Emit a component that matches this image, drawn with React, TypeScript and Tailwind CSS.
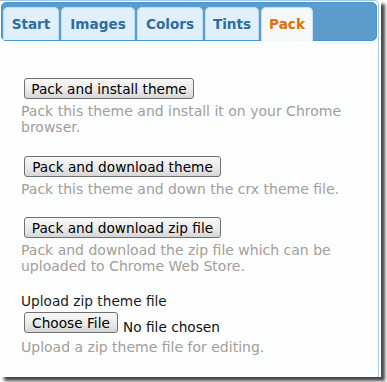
import React from "react";

const tabs = [
  { label: "Start", w: "w-[56px]" },
  { label: "Images", w: "w-[74px]" },
  { label: "Colors", w: "w-[66px]" },
  { label: "Tints", w: "w-[54px]" },
  { label: "Pack", w: "w-[52px]", active: true },
];

function Btn({ children, w }: { children: React.ReactNode; w: string }) {
  return (
    <button
      className={`${w} h-[21px] ml-[3px] flex items-center justify-center border border-[#707070] rounded-[3px] bg-linear-to-b from-[#f7f7f7] via-[#ececec] to-[#d6d6d6] text-[13.7px] leading-[16px] text-black whitespace-nowrap`}
    >
      {children}
    </button>
  );
}

function Desc({ children }: { children: React.ReactNode }) {
  return <p className="mt-[4px] text-[14px] leading-[16px] text-[#a39e98]">{children}</p>;
}

export default function App() {
  return (
    <div className="w-[387px] h-[382px] bg-white overflow-hidden font-['DejaVu_Sans',Verdana,sans-serif]">
      <div className="w-[381px] h-[377px] bg-white shadow-[4px_4px_3px_rgba(40,40,40,0.85)]">
        <div className="w-[379px] h-[377px] bg-[#fcfdfd] border-t border-r border-[#a6c9e2] rounded-tr-[5px] pt-[1px] flex flex-col">
          <div className="ml-[1px] w-[376px] h-[39px] bg-[#5c9ccc] border border-[#4297d7] rounded-[5px] pt-[4px] pl-[1px] flex items-start gap-[2px]">
            {tabs.map((t) =>
              t.active ? (
                <div
                  key={t.label}
                  className={`${t.w} h-[34px] mb-[-1px] bg-[#f5f8f9] border border-b-0 border-[#c9def0] rounded-t-[5px] pt-[8px] text-center text-[13.6px] leading-[16px] font-bold text-[#e17009]`}
                >
                  {t.label}
                </div>
              ) : (
                <div
                  key={t.label}
                  className={`${t.w} h-[33px] bg-[#dfeffc] border border-b-0 border-[#c5dbec] rounded-t-[5px] pt-[8px] text-center text-[13.6px] leading-[16px] font-bold text-[#2e6e9e]`}
                >
                  {t.label}
                </div>
              )
            )}
          </div>

          <div className="pl-[21px] pr-[16px] pt-[37px] flex flex-col items-start">
            <Btn w="w-[170px]">Pack and install theme</Btn>
            <Desc>Pack this theme and install it on your Chrome browser.</Desc>

            <div className="mt-[21px]">
              <Btn w="w-[197px]">Pack and download theme</Btn>
            </div>
            <Desc>Pack this theme and down the crx theme file.</Desc>

            <div className="mt-[20px]">
              <Btn w="w-[197px]">Pack and download zip file</Btn>
            </div>
            <Desc>Pack and download the zip file which can be uploaded to Chrome Web Store.</Desc>

            <p className="mt-[19px] text-[13.7px] leading-[16px] text-[#1a1a1a]">Upload zip theme file</p>
            <div className="mt-[3px] flex items-start">
              <Btn w="w-[94px]">Choose File</Btn>
              <span className="ml-[5px] mt-[7px] text-[13.7px] leading-[16px] text-[#111]">No file chosen</span>
            </div>
            <Desc>Upload a zip theme file for editing.</Desc>
          </div>
        </div>
      </div>
    </div>
  );
}
